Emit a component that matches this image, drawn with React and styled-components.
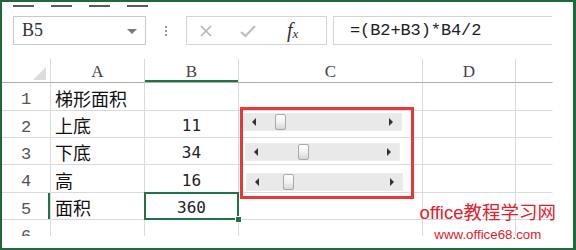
import React from 'react';
import styled, { createGlobalStyle } from 'styled-components';

const GlobalStyle = createGlobalStyle`
  html, body {
    margin: 0;
    padding: 0;
    background: #fff;
  }
`;

const GREEN = '#217346';
const GRID = '#dadada';

const rows = [
  { n: 1, a: '梯形面积', b: '' },
  { n: 2, a: '上底', b: '11' },
  { n: 3, a: '下底', b: '34' },
  { n: 4, a: '高', b: '16' },
  { n: 5, a: '面积', b: '360', active: true },
  { n: 6, a: '', b: '' },
];

const sliders = [
  { value: 20, offset: 0, width: 159 },
  { value: 34, offset: 2, width: 155 },
  { value: 23, offset: 3, width: 157 },
];

export default function App() {
  return (
    <>
      <GlobalStyle />
      <Frame>
        <Dashes>
          <Dash />
          <Dash />
          <Dash />
          <Dash />
        </Dashes>
        <FormulaBar>
          <NameBox>
            B5
            <DropArrow />
          </NameBox>
          <Grip>
            <i />
            <i />
            <i />
          </Grip>
          <FnButtons>
            <svg width="14" height="14" viewBox="0 0 14 14">
              <path d="M2 2 L12 12 M12 2 L2 12" stroke="#b4b4b4" strokeWidth="1.6" fill="none" />
            </svg>
            <svg width="18" height="14" viewBox="0 0 18 14">
              <path d="M2 8 L6.5 12 L16 2" stroke="#bdbdbd" strokeWidth="2" fill="none" />
            </svg>
            <Fx>
              f<sub>x</sub>
            </Fx>
          </FnButtons>
          <FormulaInput>=(B2+B3)*B4/2</FormulaInput>
        </FormulaBar>
        <SheetWrap>
          <Sheet>
            <Corner>
              <span />
            </Corner>
            <ColHead>A</ColHead>
            <ColHead $active>B</ColHead>
            <ColHead>C</ColHead>
            <ColHead>D</ColHead>
            <ColHead $last />
            {rows.map((r) => (
              <React.Fragment key={r.n}>
                <RowHead $active={r.active}>{r.n}</RowHead>
                <TextCell>{r.a}</TextCell>
                <NumCell $active={r.active}>{r.b}</NumCell>
                <Cell />
                <Cell />
                <Cell $last />
              </React.Fragment>
            ))}
          </Sheet>
          <ControlGroup>
            {sliders.map((s, i) => (
              <ScrollBar key={i} $offset={s.offset} $width={s.width}>
                <ArrowLeft />
                <Thumb $pos={s.value} />
                <ArrowRight />
              </ScrollBar>
            ))}
          </ControlGroup>
        </SheetWrap>
        <Watermark>
          <Brand>office教程学习网</Brand>
          <Site>www.office68.com</Site>
        </Watermark>
      </Frame>
    </>
  );
}

const Frame = styled.div`
  position: relative;
  width: 576px;
  height: 250px;
  box-sizing: border-box;
  border: 2px solid #1f6a3b;
  border-right-width: 3px;
  overflow: hidden;
  background: #fff;
  font-family: 'Liberation Mono', monospace;
  color: #333;
`;

const Dashes = styled.div`
  display: flex;
  gap: 17px;
  padding: 3px 0 0 11px;
  height: 9px;
`;

const Dash = styled.div`
  width: 21px;
  height: 2px;
  background: #5a5a5a;
`;

const FormulaBar = styled.div`
  display: flex;
  align-items: stretch;
  height: 29px;
  margin-top: 2px;
  padding-left: 11px;
`;

const NameBox = styled.div`
  position: relative;
  width: 133px;
  box-sizing: border-box;
  border: 1px solid #c8c8c8;
  display: flex;
  align-items: center;
  padding-left: 8px;
  font-family: 'Liberation Serif', serif;
  font-size: 18px;
  color: #333;
`;

const DropArrow = styled.span`
  position: absolute;
  right: 8px;
  top: 12px;
  width: 0;
  height: 0;
  border-left: 5px solid transparent;
  border-right: 5px solid transparent;
  border-top: 5px solid #7a7a7a;
`;

const Grip = styled.div`
  width: 40px;
  display: flex;
  flex-direction: column;
  align-items: center;
  justify-content: center;
  gap: 2px;
  i {
    display: block;
    width: 2px;
    height: 2px;
    background: #9a9a9a;
  }
`;

const FnButtons = styled.div`
  width: 141px;
  box-sizing: border-box;
  border: 1px solid #d4d4d4;
  display: flex;
  align-items: center;
  padding-left: 12px;
  gap: 26px;
`;

const Fx = styled.span`
  font-family: 'Liberation Serif', serif;
  font-style: italic;
  font-size: 20px;
  color: #333;
  margin-left: 4px;
  sub {
    font-size: 13px;
    vertical-align: -1px;
  }
`;

const FormulaInput = styled.div`
  margin-left: 6px;
  width: 219px;
  box-sizing: border-box;
  border: 1px solid #d4d4d4;
  border-right: none;
  display: flex;
  align-items: center;
  padding-left: 16px;
  font-family: 'Liberation Mono', monospace;
  font-size: 17px;
  letter-spacing: -0.1px;
  color: #222;
`;

const SheetWrap = styled.div`
  position: relative;
  margin-top: 14px;
  width: 551px;
  height: 177px;
  overflow: hidden;
`;

const Sheet = styled.div`
  display: grid;
  grid-template-columns: 49px 94px 94px 184px 93px 37px;
  grid-template-rows: 24px 28px 27px 27px 28px 27px 27px;
`;

const BaseCell = styled.div`
  box-sizing: border-box;
  border-right: 1px solid ${GRID};
  border-bottom: 1px solid ${GRID};
  display: flex;
  align-items: center;
  overflow: hidden;
  white-space: nowrap;
`;

const Corner = styled(BaseCell)`
  border-bottom-color: #ababab;
  justify-content: flex-end;
  align-items: flex-end;
  padding: 0 4px 2px 0;
  span {
    width: 0;
    height: 0;
    border-left: 13px solid transparent;
    border-bottom: 13px solid #dcdcdc;
  }
`;

const ColHead = styled(BaseCell)`
  justify-content: center;
  border-bottom-color: #ababab;
  border-right-color: ${(p) => (p.$last ? 'transparent' : GRID)};
  box-shadow: ${(p) => (p.$active ? `inset 0 -2px 0 ${GREEN}` : 'none')};
  font-family: 'Liberation Serif', serif;
  font-size: 17px;
  color: #444;
  padding-top: 2px;
`;

const RowHead = styled(BaseCell)`
  justify-content: center;
  box-shadow: ${(p) => (p.$active ? `inset -2px 0 0 ${GREEN}` : 'none')};
  font-family: 'Liberation Mono', monospace;
  font-size: 17px;
  color: #555;
  padding-top: 6px;
`;

const Cell = styled(BaseCell)`
  border-right-color: ${(p) => (p.$last ? 'transparent' : GRID)};
`;

const TextCell = styled(BaseCell)`
  padding: 2px 0 0 4px;
  font-family: 'Noto Sans CJK SC', sans-serif;
  font-size: 18px;
  color: #111;
`;

const NumCell = styled(BaseCell)`
  position: relative;
  justify-content: center;
  padding-top: 3px;
  font-family: 'DejaVu Sans Mono', monospace;
  font-size: 16px;
  color: #222;
  overflow: visible;
  &::after {
    content: '';
    display: ${(p) => (p.$active ? 'block' : 'none')};
    position: absolute;
    left: -1px;
    top: -1px;
    right: -1px;
    bottom: -1px;
    border: 2px solid ${GREEN};
  }
  &::before {
    content: '';
    display: ${(p) => (p.$active ? 'block' : 'none')};
    position: absolute;
    right: -4px;
    bottom: -4px;
    width: 5px;
    height: 5px;
    background: ${GREEN};
    border: 1px solid #fff;
    z-index: 2;
  }
`;

const ControlGroup = styled.div`
  position: absolute;
  left: 238px;
  top: 48px;
  width: 174px;
  height: 92px;
  box-sizing: border-box;
  border: 3px solid #e8383c;
  display: flex;
  flex-direction: column;
  gap: 12px;
  padding-top: 3px;
`;

const ScrollBar = styled.div`
  position: relative;
  margin-left: ${(p) => p.$offset}px;
  width: ${(p) => p.$width}px;
  height: 18px;
  background: #e9e9e9;
  border: 1px solid #ececec;
  box-sizing: border-box;
`;

const ArrowLeft = styled.span`
  position: absolute;
  left: 8px;
  top: 4px;
  width: 0;
  height: 0;
  border-top: 4px solid transparent;
  border-bottom: 4px solid transparent;
  border-right: 4px solid #333;
`;

const ArrowRight = styled(ArrowLeft)`
  left: auto;
  right: 8px;
  border-right: none;
  border-left: 4px solid #333;
`;

const Thumb = styled.span`
  position: absolute;
  top: 0;
  left: ${(p) => p.$pos}%;
  width: 11px;
  height: 16px;
  box-sizing: border-box;
  border: 1px solid #a9a9a9;
  border-radius: 2px;
  background: linear-gradient(to bottom, #fdfdfd 0%, #f2f2f2 50%, #d7d7d7 100%);
`;

const Watermark = styled.div`
  position: absolute;
  right: 17px;
  bottom: 7px;
  display: flex;
  flex-direction: column;
  align-items: center;
  color: #e5202b;
  font-family: 'Liberation Sans', 'Noto Sans CJK SC', sans-serif;
  line-height: 1;
`;

const Brand = styled.div`
  font-size: 18.5px;
`;

const Site = styled.div`
  margin-top: 5px;
  font-size: 13.3px;
`;
